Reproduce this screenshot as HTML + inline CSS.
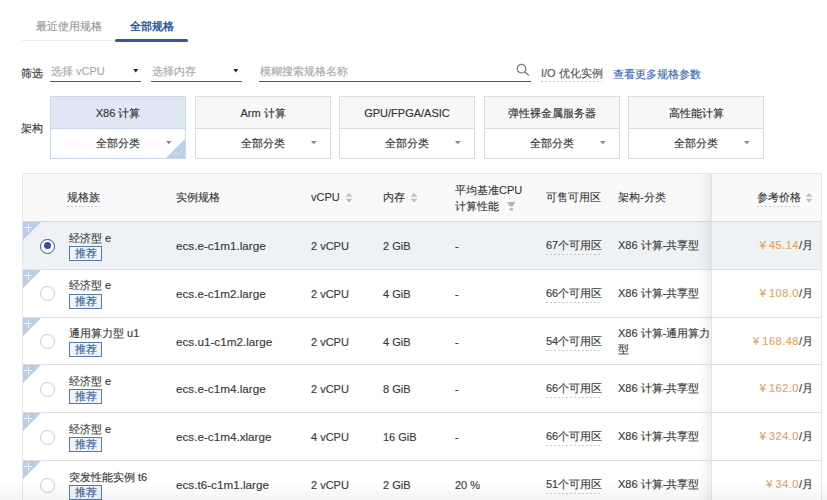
<!DOCTYPE html>
<html><head><meta charset="utf-8">
<style>
*{box-sizing:border-box;margin:0;padding:0}
html,body{width:827px;height:500px;overflow:hidden;background:#fff}
body{position:relative;font-family:"Liberation Sans",sans-serif;font-size:11px;color:#333;-webkit-text-stroke:0.15px}
.a{position:absolute;white-space:nowrap;line-height:14px}
.uline{position:absolute;height:1px;background:#5a5a5a}
.caret{position:absolute;width:6px;height:4px}
.card{position:absolute;top:96px;width:136px;height:63px;border:1px solid #dcdcdc;background:#fff}
.card .hd{position:absolute;left:0;top:0;right:0;height:32px;background:#f7f7f7;border-bottom:1px solid #dcdcdc;text-align:center;line-height:32px;color:#333}
.card .bd{position:absolute;left:0;top:32px;right:0;bottom:0;text-align:center;line-height:28px;color:#333}
.card .bd .caret{left:115px;top:12px}
.card.sel{border-color:#cbd8e8}
.card.sel .hd{background:#dfe8f4;border-bottom-color:#cbd8e8}
.th{font-weight:500;color:#333;-webkit-text-stroke:0.1px}
.dash{padding-bottom:4px;background:repeating-linear-gradient(to right,#cbcbcb 0,#cbcbcb 2px,transparent 2px,transparent 4px) left bottom/100% 1px no-repeat}
.sort{position:absolute;width:8px;height:12px}
.corner{position:absolute;left:23px;width:0;height:0;border-top:18px solid #b9cde5;border-right:18px solid transparent}
.plush{position:absolute;left:24px;width:8px;height:1px;background:#eef4fb}
.plusv{position:absolute;left:27.5px;width:1px;height:8px;background:#eef4fb}
.radio{position:absolute;left:40px;width:15px;height:15px;border:1px solid #c9c9c9;border-radius:50%;background:#fff}
.radio.on{border:1.3px solid #3e5170}
.radio.on:after{content:"";position:absolute;left:2.7px;top:2.7px;width:7px;height:7px;border-radius:50%;background:#3052a3}
.badge{position:absolute;left:69px;width:33px;height:15px;border:1px solid #5a7aa6;background:#eef5fc;color:#3d5f94;line-height:13px;text-align:center}
.price{color:#e3a462}
.cell{color:#3a3a3a}
</style></head>
<body>
<div class="a" style="left:36px;top:19px;color:#999">最近使用规格</div>
<div class="a" style="left:130px;top:19px;color:#2b5aa0;font-weight:bold;-webkit-text-stroke:0">全部规格</div>
<div style="position:absolute;left:22px;top:40px;width:93px;height:1px;background:#ececec"></div>
<div style="position:absolute;left:115px;top:38.5px;width:73px;height:3px;background:#2b5aa0;border-radius:1.5px"></div>
<div class="a" style="left:21px;top:66px;color:#333">筛选</div>
<div class="a" style="left:51px;top:64px;color:#aaa">选择 vCPU</div>
<svg class="caret" style="left:132.5px;top:68.5px" viewBox="0 0 6 4"><polygon points="0.3,0 5.2,0 2.75,3.4" fill="#222"/></svg>
<div class="uline" style="left:50px;top:81px;width:91px"></div>
<div class="a" style="left:152px;top:64px;color:#aaa">选择内存</div>
<svg class="caret" style="left:233px;top:68.5px" viewBox="0 0 6 4"><polygon points="0.3,0 5.2,0 2.75,3.4" fill="#222"/></svg>
<div class="uline" style="left:151px;top:81px;width:91px"></div>
<div class="a" style="left:260px;top:64px;color:#aaa">模糊搜索规格名称</div>
<div class="uline" style="left:259px;top:81px;width:272px"></div>
<svg style="position:absolute;left:515px;top:63px" width="16" height="14" viewBox="0 0 16 14"><circle cx="6.5" cy="5.7" r="4.3" fill="none" stroke="#777" stroke-width="1.2"/><line x1="9.6" y1="8.8" x2="13.8" y2="12.6" stroke="#777" stroke-width="1.3"/></svg>
<div class="a" style="left:541px;top:65.5px;color:#555">I/O 优化实例</div>
<div style="position:absolute;left:541px;top:81px;width:61px;height:1px;background:repeating-linear-gradient(to right,#c8c8c8 0,#c8c8c8 2px,transparent 2px,transparent 4px)"></div>
<div class="a" style="left:613px;top:67px;color:#3b6cb7">查看更多规格参数</div>
<div class="a" style="left:21px;top:121px;color:#3a3a3a">架构</div>
<div class="card sel" style="left:50px"><div class="hd">X86 计算</div><div class="bd">全部分类<svg class="caret" viewBox="0 0 6 4"><polygon points="0,0 5.6,0 2.8,3.2" fill="#888"/></svg></div><svg style="position:absolute;right:0;bottom:0" width="19" height="19" viewBox="0 0 19 19"><polygon points="19,0 19,19 0,19" fill="#bccfe8"/><polyline points="9,13.5 11.5,15.5 16,11" fill="none" stroke="#e8f0fa" stroke-width="1"/></svg></div>
<div class="card" style="left:195px"><div class="hd">Arm 计算</div><div class="bd">全部分类<svg class="caret" viewBox="0 0 6 4"><polygon points="0,0 5.6,0 2.8,3.2" fill="#888"/></svg></div></div>
<div class="card" style="left:339px"><div class="hd">GPU/FPGA/ASIC</div><div class="bd">全部分类<svg class="caret" viewBox="0 0 6 4"><polygon points="0,0 5.6,0 2.8,3.2" fill="#888"/></svg></div></div>
<div class="card" style="left:484px"><div class="hd">弹性裸金属服务器</div><div class="bd">全部分类<svg class="caret" viewBox="0 0 6 4"><polygon points="0,0 5.6,0 2.8,3.2" fill="#888"/></svg></div></div>
<div class="card" style="left:628px"><div class="hd">高性能计算</div><div class="bd">全部分类<svg class="caret" viewBox="0 0 6 4"><polygon points="0,0 5.6,0 2.8,3.2" fill="#888"/></svg></div></div>
<div style="position:absolute;left:22px;top:173px;width:800px;height:340px;border:1px solid #e6e6e6"></div>
<div style="position:absolute;left:23px;top:174px;width:798px;height:48px;background:#f9f9f9;border-bottom:1px solid #d9d9d9"></div>
<div class="a th" style="left:67px;top:190px"><span class="dash">规格族</span></div>
<div class="a th" style="left:176px;top:190px">实例规格</div>
<div class="a th" style="left:311px;top:190px;font-size:11px">vCPU</div><svg class="sort" style="left:345px;top:192px" viewBox="0 0 8 12"><polygon points="0.6,4.7 7.4,4.7 4,0.7" fill="#c0c0c0"/><polygon points="0.6,6.8 7.4,6.8 4,10.8" fill="#c0c0c0"/></svg>
<div class="a th" style="left:383px;top:190px">内存</div><svg class="sort" style="left:410px;top:192px" viewBox="0 0 8 12"><polygon points="0.6,4.7 7.4,4.7 4,0.7" fill="#c0c0c0"/><polygon points="0.6,6.8 7.4,6.8 4,10.8" fill="#c0c0c0"/></svg>
<div class="a th" style="left:455px;top:181.5px;line-height:16px">平均基准CPU<br>计算性能</div>
<svg style="position:absolute;left:507px;top:201.5px" width="9" height="9" viewBox="0 0 9 9"><polygon points="0,0 8.4,0 5.6,4.4 2.8,4.4" fill="#b5b5b5"/><rect x="2.6" y="6.2" width="3.3" height="2.3" fill="#b5b5b5"/></svg>
<div class="a th" style="left:546px;top:190px">可售可用区</div>
<div class="a th" style="left:618px;top:190px">架构-分类</div>
<div style="position:absolute;left:23px;top:222px;width:798px;height:48px;background:#eef2f5;border-bottom:1px solid #e0e0e0"></div>
<div class="corner" style="top:222px"></div><div class="plush" style="top:227px"></div><div class="plusv" style="top:223.5px"></div>
<div class="radio on" style="top:238.5px"></div>
<div class="a cell" style="left:69px;top:230.5px">经济型 e</div>
<div class="badge" style="top:246.0px">推荐</div>
<div class="a cell" style="left:176px;top:239.0px;font-size:11.7px">ecs.e-c1m1.large</div>
<div class="a cell" style="left:311px;top:239.0px;font-size:11px">2 vCPU</div>
<div class="a cell" style="left:383px;top:239.0px;font-size:11px">2 GiB</div>
<div class="a cell" style="left:455px;top:239.0px;font-size:11px">-</div>
<div class="a cell" style="left:546px;top:238.0px"><span class="dash">67个可用区</span></div>
<div class="a cell" style="left:618px;top:238.0px">X86 计算-共享型</div>
<div style="position:absolute;left:23px;top:270px;width:798px;height:48px;background:#fff;border-bottom:1px solid #e0e0e0"></div>
<div class="corner" style="top:270px"></div><div class="plush" style="top:275px"></div><div class="plusv" style="top:271.5px"></div>
<div class="radio" style="top:286.32px"></div>
<div class="a cell" style="left:69px;top:278.32px">经济型 e</div>
<div class="badge" style="top:293.82px">推荐</div>
<div class="a cell" style="left:176px;top:286.82px;font-size:11.7px">ecs.e-c1m2.large</div>
<div class="a cell" style="left:311px;top:286.82px;font-size:11px">2 vCPU</div>
<div class="a cell" style="left:383px;top:286.82px;font-size:11px">4 GiB</div>
<div class="a cell" style="left:455px;top:286.82px;font-size:11px">-</div>
<div class="a cell" style="left:546px;top:285.82px"><span class="dash">66个可用区</span></div>
<div class="a cell" style="left:618px;top:285.82px">X86 计算-共享型</div>
<div style="position:absolute;left:23px;top:318px;width:798px;height:47px;background:#fff;border-bottom:1px solid #e0e0e0"></div>
<div class="corner" style="top:318px"></div><div class="plush" style="top:323px"></div><div class="plusv" style="top:319.5px"></div>
<div class="radio" style="top:334.14px"></div>
<div class="a cell" style="left:69px;top:326.14px">通用算力型 u1</div>
<div class="badge" style="top:341.64px">推荐</div>
<div class="a cell" style="left:176px;top:334.64px;font-size:11.7px">ecs.u1-c1m2.large</div>
<div class="a cell" style="left:311px;top:334.64px;font-size:11px">2 vCPU</div>
<div class="a cell" style="left:383px;top:334.64px;font-size:11px">4 GiB</div>
<div class="a cell" style="left:455px;top:334.64px;font-size:11px">-</div>
<div class="a cell" style="left:546px;top:333.64px"><span class="dash">54个可用区</span></div>
<div class="a cell" style="left:618px;top:324.64px;line-height:16px;white-space:normal;width:94px">X86 计算-通用算力型</div>
<div style="position:absolute;left:23px;top:365px;width:798px;height:48px;background:#fff;border-bottom:1px solid #e0e0e0"></div>
<div class="corner" style="top:365px"></div><div class="plush" style="top:370px"></div><div class="plusv" style="top:366.5px"></div>
<div class="radio" style="top:381.96px"></div>
<div class="a cell" style="left:69px;top:373.96px">经济型 e</div>
<div class="badge" style="top:389.46px">推荐</div>
<div class="a cell" style="left:176px;top:382.46px;font-size:11.7px">ecs.e-c1m4.large</div>
<div class="a cell" style="left:311px;top:382.46px;font-size:11px">2 vCPU</div>
<div class="a cell" style="left:383px;top:382.46px;font-size:11px">8 GiB</div>
<div class="a cell" style="left:455px;top:382.46px;font-size:11px">-</div>
<div class="a cell" style="left:546px;top:381.46px"><span class="dash">66个可用区</span></div>
<div class="a cell" style="left:618px;top:381.46px">X86 计算-共享型</div>
<div style="position:absolute;left:23px;top:413px;width:798px;height:48px;background:#fff;border-bottom:1px solid #e0e0e0"></div>
<div class="corner" style="top:413px"></div><div class="plush" style="top:418px"></div><div class="plusv" style="top:414.5px"></div>
<div class="radio" style="top:429.78px"></div>
<div class="a cell" style="left:69px;top:421.78px">经济型 e</div>
<div class="badge" style="top:437.28px">推荐</div>
<div class="a cell" style="left:176px;top:430.28px;font-size:11.7px">ecs.e-c1m4.xlarge</div>
<div class="a cell" style="left:311px;top:430.28px;font-size:11px">4 vCPU</div>
<div class="a cell" style="left:383px;top:430.28px;font-size:11px">16 GiB</div>
<div class="a cell" style="left:455px;top:430.28px;font-size:11px">-</div>
<div class="a cell" style="left:546px;top:429.28px"><span class="dash">66个可用区</span></div>
<div class="a cell" style="left:618px;top:429.28px">X86 计算-共享型</div>
<div style="position:absolute;left:23px;top:461px;width:798px;height:48px;background:#fff;border-bottom:1px solid #e0e0e0"></div>
<div class="corner" style="top:461px"></div><div class="plush" style="top:466px"></div><div class="plusv" style="top:462.5px"></div>
<div class="radio" style="top:477.6px"></div>
<div class="a cell" style="left:69px;top:469.6px">突发性能实例 t6</div>
<div class="badge" style="top:485.1px">推荐</div>
<div class="a cell" style="left:176px;top:478.1px;font-size:11.7px">ecs.t6-c1m1.large</div>
<div class="a cell" style="left:311px;top:478.1px;font-size:11px">2 vCPU</div>
<div class="a cell" style="left:383px;top:478.1px;font-size:11px">2 GiB</div>
<div class="a cell" style="left:455px;top:478.1px;font-size:11px">20 %</div>
<div class="a cell" style="left:546px;top:477.1px"><span class="dash">51个可用区</span></div>
<div class="a cell" style="left:618px;top:477.1px">X86 计算-共享型</div>
<div style="position:absolute;left:699px;top:174px;width:12px;height:326px;background:linear-gradient(to right,rgba(0,0,0,0),rgba(0,0,0,0.06))"></div>
<div style="position:absolute;left:711px;top:174px;width:110px;height:48px;background:#f9f9f9;border-left:1px solid #e3e3e3;border-bottom:1px solid #d9d9d9"></div>
<div class="a th" style="left:757px;top:190px"><span class="dash">参考价格</span></div><svg class="sort" style="left:805px;top:192px" viewBox="0 0 8 12"><polygon points="0.6,4.7 7.4,4.7 4,0.7" fill="#c0c0c0"/><polygon points="0.6,6.8 7.4,6.8 4,10.8" fill="#c0c0c0"/></svg>
<div style="position:absolute;left:711px;top:222px;width:110px;height:48px;background:#eef2f5;border-left:1px solid #e3e3e3;border-bottom:1px solid #e0e0e0"></div>
<div class="a cell" style="right:14px;top:238.0px;font-size:11px"><span class="price">¥ <span style="letter-spacing:0.5px">45.14</span></span>/月</div>
<div style="position:absolute;left:711px;top:270px;width:110px;height:48px;background:#fff;border-left:1px solid #e3e3e3;border-bottom:1px solid #e0e0e0"></div>
<div class="a cell" style="right:14px;top:285.82px;font-size:11px"><span class="price">¥ <span style="letter-spacing:0.5px">108.0</span></span>/月</div>
<div style="position:absolute;left:711px;top:318px;width:110px;height:47px;background:#fff;border-left:1px solid #e3e3e3;border-bottom:1px solid #e0e0e0"></div>
<div class="a cell" style="right:14px;top:333.64px;font-size:11px"><span class="price">¥ <span style="letter-spacing:0.5px">168.48</span></span>/月</div>
<div style="position:absolute;left:711px;top:365px;width:110px;height:48px;background:#fff;border-left:1px solid #e3e3e3;border-bottom:1px solid #e0e0e0"></div>
<div class="a cell" style="right:14px;top:381.46px;font-size:11px"><span class="price">¥ <span style="letter-spacing:0.5px">162.0</span></span>/月</div>
<div style="position:absolute;left:711px;top:413px;width:110px;height:48px;background:#fff;border-left:1px solid #e3e3e3;border-bottom:1px solid #e0e0e0"></div>
<div class="a cell" style="right:14px;top:429.28px;font-size:11px"><span class="price">¥ <span style="letter-spacing:0.5px">324.0</span></span>/月</div>
<div style="position:absolute;left:711px;top:461px;width:110px;height:48px;background:#fff;border-left:1px solid #e3e3e3;border-bottom:1px solid #e0e0e0"></div>
<div class="a cell" style="right:14px;top:477.1px;font-size:11px"><span class="price">¥ <span style="letter-spacing:0.5px">34.0</span></span>/月</div>
<div style="position:absolute;left:0;top:482px;width:827px;height:18px;background:linear-gradient(to bottom,rgba(0,0,0,0),rgba(0,0,0,0.045))"></div>
</body></html>
